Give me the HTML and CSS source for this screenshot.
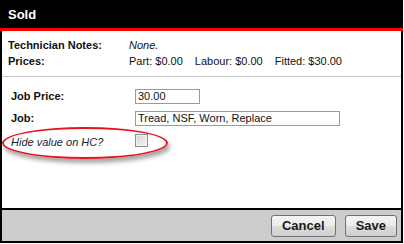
FILE: index.html
```html
<!DOCTYPE html>
<html lang="en">
  <head>
    <meta charset="UTF-8" />
    <title>Sold</title>
    <link rel="stylesheet" href="styles.css">
  </head>
  <body>
    <div class="dialog">
      <div class="dialog-title">Sold</div>

      <div class="dialog-body">
        <div class="summary">
          <span class="summary-label">Technician Notes:</span>
          <span class="summary-value notes">None.</span>
          <span class="summary-label">Prices:</span>
          <span class="summary-value prices">
            <span>Part: $0.00</span>
            <span>Labour: $0.00</span>
            <span>Fitted: $30.00</span>
          </span>
        </div>

        <div class="job-form">
          <label class="field-label" for="job-price">Job Price:</label>
          <input class="field-input price" id="job-price" type="text" value="30.00" />

          <label class="field-label" for="job">Job:</label>
          <input class="field-input job" id="job" type="text" value="Tread, NSF, Worn, Replace" />

          <label class="field-label hide-label" for="hide-hc">Hide value on HC?</label>
          <span><input class="field-check" id="hide-hc" type="checkbox" /></span>

          <!-- annotation ring drawn over the form -->
          <div class="highlight"></div>
        </div>
      </div>

      <div class="dialog-footer">
        <button class="btn">Cancel</button>
        <button class="btn">Save</button>
      </div>
    </div>
  </body>
</html>
```

FILE: styles.css
```css
* {
  margin: 0;
  padding: 0;
  box-sizing: border-box;
}

body {
  background: #fff;
  font-family: "Liberation Sans", Arial, sans-serif;
  font-size: 11px;
  color: #111;
}

.dialog {
  width: 403px;
  height: 243px;
  display: flex;
  flex-direction: column;
}

.dialog-title {
  height: 31px;
  background: #000;
  border-bottom: 3px solid #f00;
  color: #fff;
  font-size: 13px;
  font-weight: bold;
  line-height: 29px;
  padding-left: 8px;
}

.dialog-body {
  flex: 1;
  border-left: 2px solid #000;
  border-right: 2px solid #000;
}

/* Notes + prices block */
.summary {
  display: grid;
  grid-template-columns: 121px auto;
  line-height: 16px;
  padding: 6px 6px 7px 6px;
  border-bottom: 1px solid #c8c8c8;
}

.summary-label {
  font-weight: bold;
}

.notes {
  font-style: italic;
}

.prices {
  display: flex;
  gap: 12px;
}

/* Job form */
.job-form {
  position: relative;
  display: grid;
  grid-template-columns: 124px auto;
  grid-auto-rows: 22px;
  align-items: center;
  padding: 8px 0 0 9px;
}

.field-label {
  font-weight: bold;
}

.hide-label {
  font-weight: normal;
  font-style: italic;
  color: #1c1c2c;
  padding-top: 3px;
}

.field-input {
  height: 15px;
  border: 1px solid #9a9a9a;
  font-family: "Liberation Sans", Arial, sans-serif;
  font-size: 11px;
  color: #111;
  padding: 0 2px;
  outline: none;
}

.field-input.price {
  width: 65px;
}

.field-input.job {
  width: 205px;
}

.field-check {
  appearance: none;
  -webkit-appearance: none;
  display: block;
  width: 13px;
  height: 13px;
  border: 1px solid #8e8e8e;
  background: linear-gradient(135deg, #d6d6d6 0%, #f4f4f4 100%);
  box-shadow: inset 0 0 0 1px #f2f2f2;
  margin-top: 1px;
}

.highlight {
  position: absolute;
  left: 0;
  top: 50px;
  width: 166px;
  height: 32px;
  border: 2px solid #e8141c;
  border-radius: 50%;
  box-shadow: 2px 4px 4px rgba(0, 0, 0, 0.35);
  pointer-events: none;
}

/* Footer with buttons */
.dialog-footer {
  height: 35px;
  background: #cccccc;
  border: 2px solid #000;
  display: flex;
  justify-content: flex-end;
  align-items: center;
  gap: 9px;
  padding-right: 4px;
}

.btn {
  height: 22px;
  padding: 0 10px;
  border: 1px solid #707070;
  border-radius: 3px;
  background: linear-gradient(#f4f4f4 0%, #ebebeb 50%, #dddddd 51%, #cfcfcf 100%);
  font-family: "Liberation Sans", Arial, sans-serif;
  font-size: 13px;
  font-weight: bold;
  color: #1a1a1a;
}
```
